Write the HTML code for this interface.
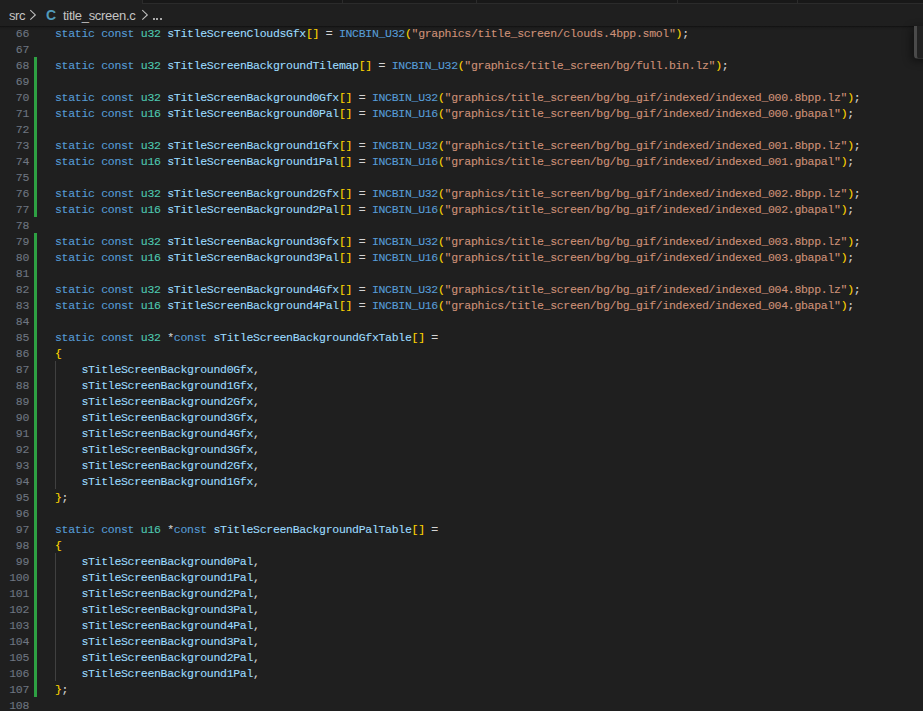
<!DOCTYPE html>
<html><head><meta charset="utf-8">
<style>
html,body{margin:0;padding:0;}
body{width:923px;height:711px;overflow:hidden;background:#1f1f1f;position:relative;}
#tabs{position:absolute;left:0;top:0;width:923px;height:4px;background:#181818;}
#tabs .bb{position:absolute;left:142px;right:0;top:3px;height:1px;background:#2b2b2b;}
#tabs .act{position:absolute;left:0;top:0;width:142px;height:4px;background:#1f1f1f;}
#tabs .sep{position:absolute;top:0;width:1px;height:3px;background:#2b2b2b;}
#crumbs{position:absolute;left:0;top:4px;width:923px;height:22px;font-family:"Liberation Sans",sans-serif;font-size:13px;color:#c4c4c4;}
#crumbs span{position:absolute;top:4px;white-space:pre;}
#editor{position:absolute;left:0;top:26px;width:923px;height:685px;overflow:hidden;}
#inner{position:absolute;left:0;top:-26px;width:923px;height:740px;}
.ln{position:absolute;left:0;width:29px;padding-top:1px;height:16px;line-height:16px;text-align:right;color:#6e7681;font-family:"Liberation Mono",monospace;font-size:11.5px;letter-spacing:-0.3px;-webkit-text-stroke:0.1px currentColor;}
.cl{position:absolute;left:55px;padding-top:1px;height:16px;line-height:16px;white-space:pre;color:#d4d4d4;font-family:"Liberation Mono",monospace;font-size:11.5px;letter-spacing:-0.3px;-webkit-text-stroke:0.1px currentColor;}
.k{color:#569cd6}.t{color:#4ec9b0}.v{color:#9cdcfe}.s{color:#ce9178}.b{color:#ffd700}
.gb{position:absolute;left:34px;width:3px;background:#2ea043;}
.ig{position:absolute;left:55px;width:1px;background:#404040;}
#shadow{position:absolute;left:0;top:26px;width:923px;height:6px;background:linear-gradient(rgba(0,0,0,0.5),rgba(0,0,0,0.12) 40%,rgba(0,0,0,0));height:4px;}
#slider{position:absolute;left:914px;top:26px;width:20px;height:32px;border-left:3px solid #4a4a4a;border-bottom:1px solid #303030;border-bottom-left-radius:4px;background:#222222;box-shadow:-3px 2px 8px rgba(0,0,0,0.45);}
</style></head><body>
<div id="tabs">
 <div class="bb"></div>
 <div class="act"></div>
 <div class="sep" style="left:142px"></div>
 <div class="sep" style="left:342px"></div>
 <div class="sep" style="left:476px"></div>
 <div class="sep" style="left:677px"></div>
 <div class="sep" style="left:797px"></div>
</div>
<div id="crumbs">
 <span style="left:9px;letter-spacing:-0.4px">src</span>
 <svg style="position:absolute;left:0;top:0" width="170" height="22"><polyline points="30.3,6.2 35.3,10.9 30.3,15.6" fill="none" stroke="#c0c0c0" stroke-width="1.1"/><polyline points="142.3,6.2 147.3,10.9 142.3,15.6" fill="none" stroke="#c0c0c0" stroke-width="1.1"/></svg>
 <span style="left:46px;top:3px;font-size:14px;color:#519aba;font-weight:bold">C</span>
 <span style="left:63px;letter-spacing:-0.3px">title_screen.c</span>
 <div style="position:absolute;left:153px;top:14px;width:2px;height:2px;background:#a8a8a8"></div><div style="position:absolute;left:156px;top:14px;width:2px;height:2px;background:#a8a8a8"></div><div style="position:absolute;left:159.5px;top:14px;width:2px;height:2px;background:#a8a8a8"></div>
</div>
<div id="editor"><div id="inner">
<div class="gb" style="top:57px;height:160px"></div>
<div class="gb" style="top:233px;height:464px"></div>
<div class="ig" style="top:361px;height:128px"></div>
<div class="ig" style="top:553px;height:128px"></div>
<div class="ln" style="top:25px">66</div>
<div class="ln" style="top:41px">67</div>
<div class="ln" style="top:57px">68</div>
<div class="ln" style="top:73px">69</div>
<div class="ln" style="top:89px">70</div>
<div class="ln" style="top:105px">71</div>
<div class="ln" style="top:121px">72</div>
<div class="ln" style="top:137px">73</div>
<div class="ln" style="top:153px">74</div>
<div class="ln" style="top:169px">75</div>
<div class="ln" style="top:185px">76</div>
<div class="ln" style="top:201px">77</div>
<div class="ln" style="top:217px">78</div>
<div class="ln" style="top:233px">79</div>
<div class="ln" style="top:249px">80</div>
<div class="ln" style="top:265px">81</div>
<div class="ln" style="top:281px">82</div>
<div class="ln" style="top:297px">83</div>
<div class="ln" style="top:313px">84</div>
<div class="ln" style="top:329px">85</div>
<div class="ln" style="top:345px">86</div>
<div class="ln" style="top:361px">87</div>
<div class="ln" style="top:377px">88</div>
<div class="ln" style="top:393px">89</div>
<div class="ln" style="top:409px">90</div>
<div class="ln" style="top:425px">91</div>
<div class="ln" style="top:441px">92</div>
<div class="ln" style="top:457px">93</div>
<div class="ln" style="top:473px">94</div>
<div class="ln" style="top:489px">95</div>
<div class="ln" style="top:505px">96</div>
<div class="ln" style="top:521px">97</div>
<div class="ln" style="top:537px">98</div>
<div class="ln" style="top:553px">99</div>
<div class="ln" style="top:569px">100</div>
<div class="ln" style="top:585px">101</div>
<div class="ln" style="top:601px">102</div>
<div class="ln" style="top:617px">103</div>
<div class="ln" style="top:633px">104</div>
<div class="ln" style="top:649px">105</div>
<div class="ln" style="top:665px">106</div>
<div class="ln" style="top:681px">107</div>
<div class="ln" style="top:697px">108</div>
<div class="cl" style="top:25px"><span class="k">static</span> <span class="k">const</span> <span class="t">u32</span> <span class="v">sTitleScreenCloudsGfx</span><span class="b">[]</span> = <span class="k">INCBIN_U32</span><span class="b">(</span><span class="s">&quot;graphics/title_screen/clouds.4bpp.smol&quot;</span><span class="b">)</span>;</div>
<div class="cl" style="top:57px"><span class="k">static</span> <span class="k">const</span> <span class="t">u32</span> <span class="v">sTitleScreenBackgroundTilemap</span><span class="b">[]</span> = <span class="k">INCBIN_U32</span><span class="b">(</span><span class="s">&quot;graphics/title_screen/bg/full.bin.lz&quot;</span><span class="b">)</span>;</div>
<div class="cl" style="top:89px"><span class="k">static</span> <span class="k">const</span> <span class="t">u32</span> <span class="v">sTitleScreenBackground0Gfx</span><span class="b">[]</span> = <span class="k">INCBIN_U32</span><span class="b">(</span><span class="s">&quot;graphics/title_screen/bg/bg_gif/indexed/indexed_000.8bpp.lz&quot;</span><span class="b">)</span>;</div>
<div class="cl" style="top:105px"><span class="k">static</span> <span class="k">const</span> <span class="t">u16</span> <span class="v">sTitleScreenBackground0Pal</span><span class="b">[]</span> = <span class="k">INCBIN_U16</span><span class="b">(</span><span class="s">&quot;graphics/title_screen/bg/bg_gif/indexed/indexed_000.gbapal&quot;</span><span class="b">)</span>;</div>
<div class="cl" style="top:137px"><span class="k">static</span> <span class="k">const</span> <span class="t">u32</span> <span class="v">sTitleScreenBackground1Gfx</span><span class="b">[]</span> = <span class="k">INCBIN_U32</span><span class="b">(</span><span class="s">&quot;graphics/title_screen/bg/bg_gif/indexed/indexed_001.8bpp.lz&quot;</span><span class="b">)</span>;</div>
<div class="cl" style="top:153px"><span class="k">static</span> <span class="k">const</span> <span class="t">u16</span> <span class="v">sTitleScreenBackground1Pal</span><span class="b">[]</span> = <span class="k">INCBIN_U16</span><span class="b">(</span><span class="s">&quot;graphics/title_screen/bg/bg_gif/indexed/indexed_001.gbapal&quot;</span><span class="b">)</span>;</div>
<div class="cl" style="top:185px"><span class="k">static</span> <span class="k">const</span> <span class="t">u32</span> <span class="v">sTitleScreenBackground2Gfx</span><span class="b">[]</span> = <span class="k">INCBIN_U32</span><span class="b">(</span><span class="s">&quot;graphics/title_screen/bg/bg_gif/indexed/indexed_002.8bpp.lz&quot;</span><span class="b">)</span>;</div>
<div class="cl" style="top:201px"><span class="k">static</span> <span class="k">const</span> <span class="t">u16</span> <span class="v">sTitleScreenBackground2Pal</span><span class="b">[]</span> = <span class="k">INCBIN_U16</span><span class="b">(</span><span class="s">&quot;graphics/title_screen/bg/bg_gif/indexed/indexed_002.gbapal&quot;</span><span class="b">)</span>;</div>
<div class="cl" style="top:233px"><span class="k">static</span> <span class="k">const</span> <span class="t">u32</span> <span class="v">sTitleScreenBackground3Gfx</span><span class="b">[]</span> = <span class="k">INCBIN_U32</span><span class="b">(</span><span class="s">&quot;graphics/title_screen/bg/bg_gif/indexed/indexed_003.8bpp.lz&quot;</span><span class="b">)</span>;</div>
<div class="cl" style="top:249px"><span class="k">static</span> <span class="k">const</span> <span class="t">u16</span> <span class="v">sTitleScreenBackground3Pal</span><span class="b">[]</span> = <span class="k">INCBIN_U16</span><span class="b">(</span><span class="s">&quot;graphics/title_screen/bg/bg_gif/indexed/indexed_003.gbapal&quot;</span><span class="b">)</span>;</div>
<div class="cl" style="top:281px"><span class="k">static</span> <span class="k">const</span> <span class="t">u32</span> <span class="v">sTitleScreenBackground4Gfx</span><span class="b">[]</span> = <span class="k">INCBIN_U32</span><span class="b">(</span><span class="s">&quot;graphics/title_screen/bg/bg_gif/indexed/indexed_004.8bpp.lz&quot;</span><span class="b">)</span>;</div>
<div class="cl" style="top:297px"><span class="k">static</span> <span class="k">const</span> <span class="t">u16</span> <span class="v">sTitleScreenBackground4Pal</span><span class="b">[]</span> = <span class="k">INCBIN_U16</span><span class="b">(</span><span class="s">&quot;graphics/title_screen/bg/bg_gif/indexed/indexed_004.gbapal&quot;</span><span class="b">)</span>;</div>
<div class="cl" style="top:329px"><span class="k">static</span> <span class="k">const</span> <span class="t">u32</span> *<span class="k">const</span> <span class="v">sTitleScreenBackgroundGfxTable</span><span class="b">[]</span> =</div>
<div class="cl" style="top:345px"><span class="b">{</span></div>
<div class="cl" style="top:361px">    <span class="v">sTitleScreenBackground0Gfx</span>,</div>
<div class="cl" style="top:377px">    <span class="v">sTitleScreenBackground1Gfx</span>,</div>
<div class="cl" style="top:393px">    <span class="v">sTitleScreenBackground2Gfx</span>,</div>
<div class="cl" style="top:409px">    <span class="v">sTitleScreenBackground3Gfx</span>,</div>
<div class="cl" style="top:425px">    <span class="v">sTitleScreenBackground4Gfx</span>,</div>
<div class="cl" style="top:441px">    <span class="v">sTitleScreenBackground3Gfx</span>,</div>
<div class="cl" style="top:457px">    <span class="v">sTitleScreenBackground2Gfx</span>,</div>
<div class="cl" style="top:473px">    <span class="v">sTitleScreenBackground1Gfx</span>,</div>
<div class="cl" style="top:489px"><span class="b">}</span>;</div>
<div class="cl" style="top:521px"><span class="k">static</span> <span class="k">const</span> <span class="t">u16</span> *<span class="k">const</span> <span class="v">sTitleScreenBackgroundPalTable</span><span class="b">[]</span> =</div>
<div class="cl" style="top:537px"><span class="b">{</span></div>
<div class="cl" style="top:553px">    <span class="v">sTitleScreenBackground0Pal</span>,</div>
<div class="cl" style="top:569px">    <span class="v">sTitleScreenBackground1Pal</span>,</div>
<div class="cl" style="top:585px">    <span class="v">sTitleScreenBackground2Pal</span>,</div>
<div class="cl" style="top:601px">    <span class="v">sTitleScreenBackground3Pal</span>,</div>
<div class="cl" style="top:617px">    <span class="v">sTitleScreenBackground4Pal</span>,</div>
<div class="cl" style="top:633px">    <span class="v">sTitleScreenBackground3Pal</span>,</div>
<div class="cl" style="top:649px">    <span class="v">sTitleScreenBackground2Pal</span>,</div>
<div class="cl" style="top:665px">    <span class="v">sTitleScreenBackground1Pal</span>,</div>
<div class="cl" style="top:681px"><span class="b">}</span>;</div>
</div></div>
<div id="shadow"></div>
<div id="slider"></div>
</body></html>
